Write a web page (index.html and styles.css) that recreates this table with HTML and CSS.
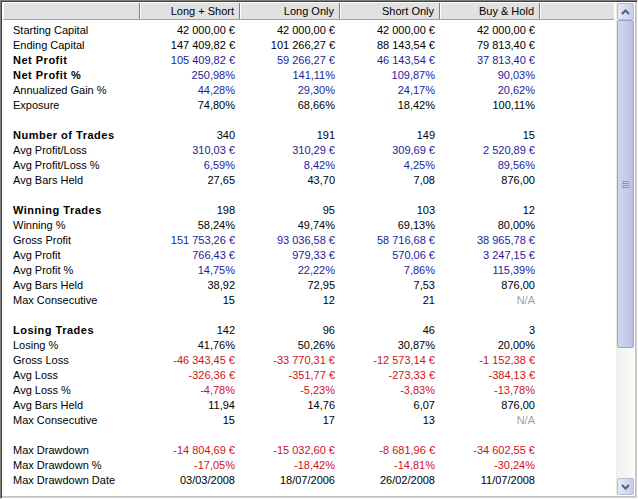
FILE: index.html
```html
<!DOCTYPE html>
<html lang="en">
<head>
  <meta charset="UTF-8" />
  <title>Backtest Report</title>
  <link rel="stylesheet" href="styles.css">
</head>
<body>
  <div class="frame">
    <div class="list">
      <div class="header">
        <div class="hcell label"></div>
        <div class="hcell">Long + Short</div>
        <div class="hcell">Long Only</div>
        <div class="hcell">Short Only</div>
        <div class="hcell">Buy &amp; Hold</div>
        <div class="hcell filler"></div>
      </div>

      <div class="rows">
        <div class="row"><span class="label">Starting Capital</span><span>42 000,00 €</span><span>42 000,00 €</span><span>42 000,00 €</span><span>42 000,00 €</span></div>
        <div class="row"><span class="label">Ending Capital</span><span>147 409,82 €</span><span>101 266,27 €</span><span>88 143,54 €</span><span>79 813,40 €</span></div>
        <div class="row blue"><span class="label bold">Net Profit</span><span>105 409,82 €</span><span>59 266,27 €</span><span>46 143,54 €</span><span>37 813,40 €</span></div>
        <div class="row blue"><span class="label bold">Net Profit %</span><span>250,98%</span><span>141,11%</span><span>109,87%</span><span>90,03%</span></div>
        <div class="row blue"><span class="label">Annualized Gain %</span><span>44,28%</span><span>29,30%</span><span>24,17%</span><span>20,62%</span></div>
        <div class="row"><span class="label">Exposure</span><span>74,80%</span><span>68,66%</span><span>18,42%</span><span>100,11%</span></div>
        <div class="row"></div>

        <div class="row"><span class="label bold">Number of Trades</span><span>340</span><span>191</span><span>149</span><span>15</span></div>
        <div class="row blue"><span class="label">Avg Profit/Loss</span><span>310,03 €</span><span>310,29 €</span><span>309,69 €</span><span>2 520,89 €</span></div>
        <div class="row blue"><span class="label">Avg Profit/Loss %</span><span>6,59%</span><span>8,42%</span><span>4,25%</span><span>89,56%</span></div>
        <div class="row"><span class="label">Avg Bars Held</span><span>27,65</span><span>43,70</span><span>7,08</span><span>876,00</span></div>
        <div class="row"></div>

        <div class="row"><span class="label bold">Winning Trades</span><span>198</span><span>95</span><span>103</span><span>12</span></div>
        <div class="row"><span class="label">Winning %</span><span>58,24%</span><span>49,74%</span><span>69,13%</span><span>80,00%</span></div>
        <div class="row blue"><span class="label">Gross Profit</span><span>151 753,26 €</span><span>93 036,58 €</span><span>58 716,68 €</span><span>38 965,78 €</span></div>
        <div class="row blue"><span class="label">Avg Profit</span><span>766,43 €</span><span>979,33 €</span><span>570,06 €</span><span>3 247,15 €</span></div>
        <div class="row blue"><span class="label">Avg Profit %</span><span>14,75%</span><span>22,22%</span><span>7,86%</span><span>115,39%</span></div>
        <div class="row"><span class="label">Avg Bars Held</span><span>38,92</span><span>72,95</span><span>7,53</span><span>876,00</span></div>
        <div class="row"><span class="label">Max Consecutive</span><span>15</span><span>12</span><span>21</span><span class="na">N/A</span></div>
        <div class="row"></div>

        <div class="row"><span class="label bold">Losing Trades</span><span>142</span><span>96</span><span>46</span><span>3</span></div>
        <div class="row"><span class="label">Losing %</span><span>41,76%</span><span>50,26%</span><span>30,87%</span><span>20,00%</span></div>
        <div class="row red"><span class="label">Gross Loss</span><span>-46 343,45 €</span><span>-33 770,31 €</span><span>-12 573,14 €</span><span>-1 152,38 €</span></div>
        <div class="row red"><span class="label">Avg Loss</span><span>-326,36 €</span><span>-351,77 €</span><span>-273,33 €</span><span>-384,13 €</span></div>
        <div class="row red"><span class="label">Avg Loss %</span><span>-4,78%</span><span>-5,23%</span><span>-3,83%</span><span>-13,78%</span></div>
        <div class="row"><span class="label">Avg Bars Held</span><span>11,94</span><span>14,76</span><span>6,07</span><span>876,00</span></div>
        <div class="row"><span class="label">Max Consecutive</span><span>15</span><span>17</span><span>13</span><span class="na">N/A</span></div>
        <div class="row"></div>

        <div class="row red"><span class="label">Max Drawdown</span><span>-14 804,69 €</span><span>-15 032,60 €</span><span>-8 681,96 €</span><span>-34 602,55 €</span></div>
        <div class="row red"><span class="label">Max Drawdown %</span><span>-17,05%</span><span>-18,42%</span><span>-14,81%</span><span>-30,24%</span></div>
        <div class="row"><span class="label">Max Drawdown Date</span><span>03/03/2008</span><span>18/07/2006</span><span>26/02/2008</span><span>11/07/2008</span></div>
      </div>
    </div>

    <div class="scrollbar">
      <div class="sb-btn">
        <svg width="9" height="6" viewBox="0 0 9 6"><path d="M1 5 L4.5 1.5 L8 5" fill="none" stroke="#4d6185" stroke-width="2"/></svg>
      </div>
      <div class="sb-thumb">
        <div class="grip"><i></i><i></i><i></i><i></i></div>
      </div>
      <div class="sb-track"></div>
      <div class="sb-btn">
        <svg width="9" height="6" viewBox="0 0 9 6"><path d="M1 1 L4.5 4.5 L8 1" fill="none" stroke="#4d6185" stroke-width="2"/></svg>
      </div>
    </div>
  </div>
</body>
</html>
```

FILE: styles.css
```css
* {
  margin: 0;
  padding: 0;
  box-sizing: border-box;
}

body {
  width: 638px;
  height: 499px;
  background-color: #d4d0c8;
  font-family: "Liberation Sans", Arial, sans-serif;
  font-size: 11px;
  color: #000;
  overflow: hidden;
}

.frame {
  display: flex;
  width: 638px;
  height: 499px;
  background-color: #fff;
  border-top: 1px solid #808080;
  border-left: 1px solid #808080;
  border-right: 1px solid #fff;
  border-bottom: 1px solid #fff;
  box-shadow: inset 1px 1px 0 #404040, inset -1px -1px 0 #d4d0c8, inset -2px -2px 0 #c0c0c0;
  padding: 2px 3px 3px 2px;
}

.list {
  flex: 1;
  overflow: hidden;
}

.header {
  display: flex;
  height: 17px;
  background-color: #e1e1e1;
  border-bottom: 1px solid #a0a0a0;
}

.hcell {
  width: 100px;
  line-height: 16px;
  padding-right: 5px;
  text-align: right;
  border-left: 1px solid #fff;
  border-right: 1px solid #808080;
  box-shadow: 1px 0 0 #d4d4d4;
}

.hcell.label {
  width: 137px;
}

.hcell.filler {
  flex: 1;
  border-right: none;
  box-shadow: none;
}

.rows {
  padding-top: 3px;
}

.row {
  display: flex;
  height: 15px;
  line-height: 15px;
  white-space: nowrap;
}

.row span {
  width: 100px;
  padding-right: 5px;
  text-align: right;
}

.row span.label {
  width: 137px;
  padding-left: 10px;
  text-align: left;
  color: #000;
}

.row .bold {
  font-weight: bold;
  letter-spacing: 0.5px;
}

.blue span {
  color: #1c1ca0;
}

.red span {
  color: #d0101a;
}

.row span.na {
  color: #a0a0a0;
}

.scrollbar {
  display: flex;
  flex-direction: column;
  width: 18px;
  margin-left: 2px;
  background-color: #f7f7f4;
  border-left: 1px solid #ecebe6;
}

.sb-btn {
  display: flex;
  align-items: center;
  justify-content: center;
  height: 17px;
  background: linear-gradient(to right, #e6e9f5, #c5cde7);
  border: 1px solid #b3bcd9;
  border-radius: 2px;
}

.sb-thumb {
  height: 328px;
  display: flex;
  align-items: center;
  justify-content: center;
  background: linear-gradient(to right, #d0d6ee, #c4cbe8 60%, #b8c0df);
  border: 1px solid #9aa3c4;
  border-radius: 2px;
}

.grip {
  display: flex;
  flex-direction: column;
  gap: 1px;
}

.grip i {
  display: block;
  width: 7px;
  height: 1px;
  background-color: #8a93b8;
}

.sb-track {
  flex: 1;
  background: linear-gradient(to right, #f1f0ec, #fbfbf9);
}
```
